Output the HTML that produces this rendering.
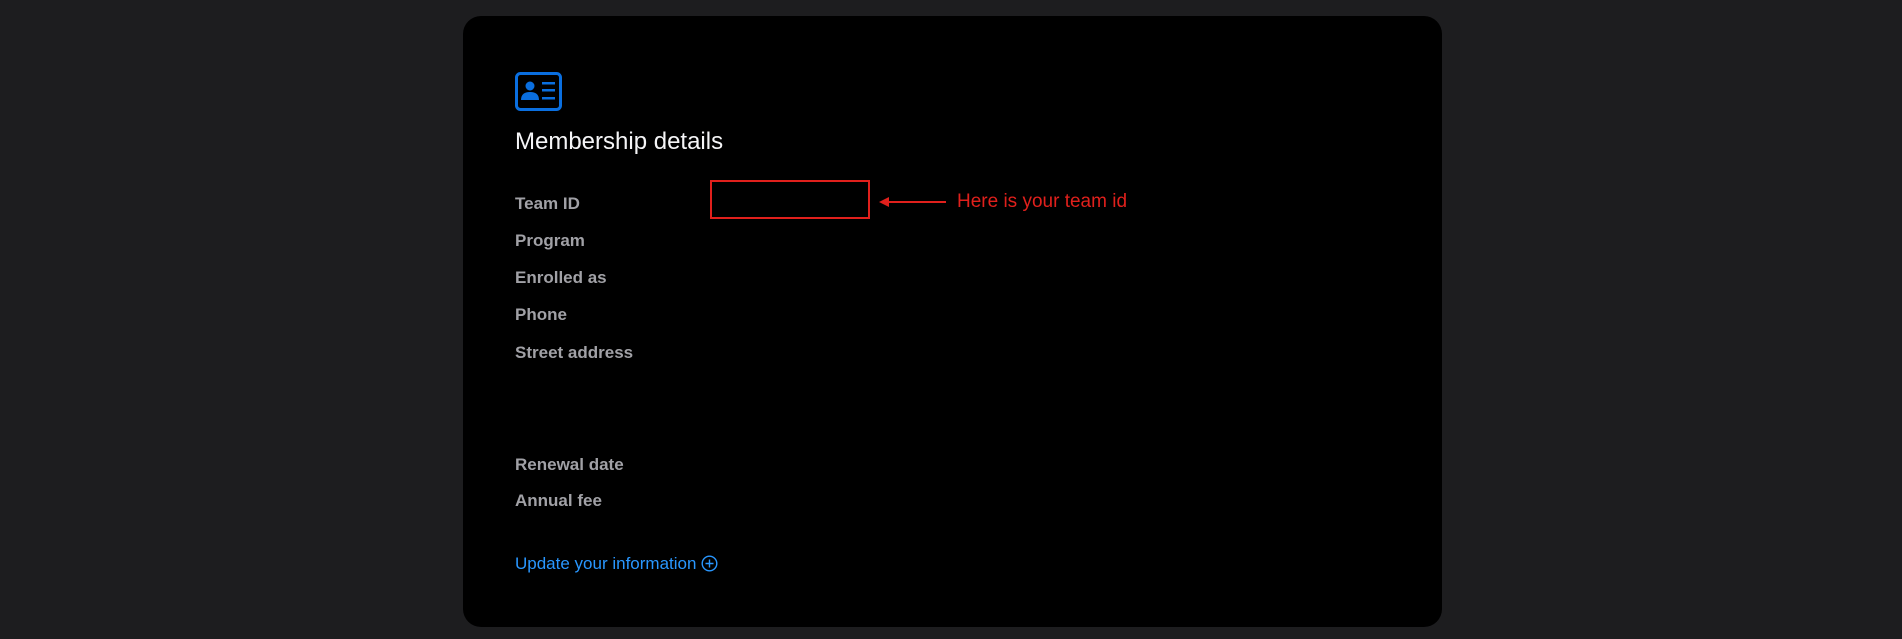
<!DOCTYPE html>
<html><head><meta charset="utf-8"><style>
html,body{margin:0;padding:0;width:1902px;height:639px;background:#1d1d1f;overflow:hidden;font-family:"Liberation Sans",sans-serif}
.card{position:absolute;left:463px;top:16px;width:979px;height:611px;background:#000;border-radius:18px}
.t{position:absolute;white-space:nowrap}
.lbl{color:#a1a1a6;font-weight:bold;font-size:17px;left:52px}
</style></head><body>
<div class="card">
<svg class="t" style="left:52px;top:56px" width="47" height="39" viewBox="0 0 47 39">
<rect x="1.5" y="1.5" width="44" height="36" rx="4" fill="none" stroke="#0a6fe0" stroke-width="3"/>
<circle cx="15" cy="14" r="4.5" fill="#0a6fe0"/>
<path d="M6 28 Q6 20 15 20 Q24 20 24 28 Z" fill="#0a6fe0"/>
<rect x="27" y="10" width="13" height="2.5" fill="#0a6fe0"/>
<rect x="27" y="17" width="13" height="2.5" fill="#0a6fe0"/>
<rect x="27" y="25" width="13" height="2.5" fill="#0a6fe0"/>
</svg>
<div class="t" style="left:52px;top:112px;color:#f5f5f7;font-size:24px">Membership details</div>
<div class="t lbl" style="top:178px">Team ID</div>
<div class="t lbl" style="top:215px">Program</div>
<div class="t lbl" style="top:252px">Enrolled as</div>
<div class="t lbl" style="top:289px">Phone</div>
<div class="t lbl" style="top:327px">Street address</div>
<div class="t lbl" style="top:439px">Renewal date</div>
<div class="t lbl" style="top:475px">Annual fee</div>
<div class="t" style="left:52px;top:538px;color:#2997ff;font-size:17px">Update your information <svg width="17" height="17" viewBox="0 0 17 17" style="vertical-align:-3px"><circle cx="8.5" cy="8.5" r="7.3" fill="none" stroke="#2997ff" stroke-width="1.4"/><path d="M8.5 4.5V12.5M4.5 8.5H12.5" stroke="#2997ff" stroke-width="1.4"/></svg></div>
<div class="t" style="left:247px;top:164px;width:160px;height:39px;border:2px solid #e0201c;box-sizing:border-box"></div>
<svg class="t" style="left:416px;top:180px" width="68" height="12" viewBox="0 0 68 12"><path d="M0 6L10 1V11Z" fill="#e0201c"/><path d="M8 6H67" stroke="#e0201c" stroke-width="2"/></svg>
<div class="t" style="left:494px;top:175px;color:#e0201c;font-size:19px">Here is your team id</div>
</div>
</body></html>
